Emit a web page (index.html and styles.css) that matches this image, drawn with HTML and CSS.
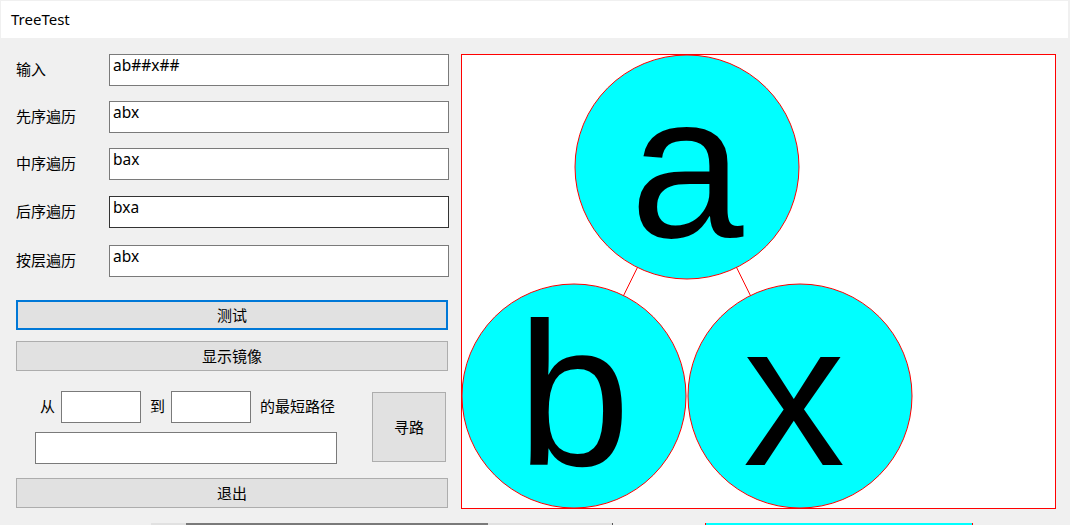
FILE: index.html
```html
<!DOCTYPE html>
<html lang="zh-CN">
<head>
<meta charset="utf-8">
<title>TreeTest</title>
<link rel="stylesheet" href="styles.css">
</head>
<body>
<div class="window">
  <div class="titlebar">TreeTest</div>
  <div class="main">
    <div class="panel">
      <div class="field">
        <span class="label">输入</span>
        <input class="textbox" type="text" value="ab##x##">
      </div>
      <div class="field">
        <span class="label">先序遍历</span>
        <input class="textbox" type="text" value="abx">
      </div>
      <div class="field">
        <span class="label">中序遍历</span>
        <input class="textbox" type="text" value="bax">
      </div>
      <div class="field field-shift1">
        <span class="label">后序遍历</span>
        <input class="textbox textbox-hover" type="text" value="bxa">
      </div>
      <div class="field field-shift2">
        <span class="label">按层遍历</span>
        <input class="textbox" type="text" value="abx">
      </div>
      <button class="btn btn-focus btn-test">测试</button>
      <button class="btn btn-mirror">显示镜像</button>
      <div class="path">
        <div class="path-left">
          <div class="path-row">
            <span class="plabel">从</span>
            <input class="textbox small" type="text">
            <span class="plabel to">到</span>
            <input class="textbox small" type="text">
            <span class="plabel tail">的最短路径</span>
          </div>
          <input class="textbox result" type="text">
        </div>
        <button class="btn btn-find">寻路</button>
      </div>
      <button class="btn btn-exit">退出</button>
    </div>
    <svg class="canvas" width="595" height="455" viewBox="0 0 595 455">
      <rect x="0.5" y="0.5" width="594" height="454" fill="#ffffff" stroke="#ff0000" stroke-width="1"/>
      <line x1="226" y1="113" x2="113" y2="342" stroke="#ff0000" stroke-width="1"/>
      <line x1="226" y1="113" x2="339" y2="342" stroke="#ff0000" stroke-width="1"/>
      <circle cx="226" cy="113" r="112" fill="#00ffff" stroke="#ff0000" stroke-width="1"/>
      <circle cx="113" cy="342" r="112" fill="#00ffff" stroke="#ff0000" stroke-width="1"/>
      <circle cx="339" cy="342" r="112" fill="#00ffff" stroke="#ff0000" stroke-width="1"/>
      <text class="node-text" x="169" y="183">a</text>
      <text class="node-text" x="56" y="411">b</text>
      <text class="node-text" x="282" y="411">x</text>
    </svg>
  </div>
  <div class="bottom-strip">
    <span class="seg seg-gap1"></span>
    <span class="seg seg-light1"></span>
    <span class="seg seg-dark"></span>
    <span class="seg seg-light2"></span>
    <span class="seg seg-mark"></span>
    <span class="seg seg-gap2"></span>
    <span class="seg seg-red"></span>
    <span class="seg seg-cyan"></span>
    <span class="seg seg-red"></span>
  </div>
</div>
</body>
</html>
```

FILE: styles.css
```css
html, body {
  margin: 0;
  padding: 0;
  background: #f0f0f0;
}

body {
  width: 1070px;
  height: 525px;
  overflow: hidden;
  font-family: "Noto Sans", "Noto Sans CJK SC", sans-serif;
  font-size: 15px;
  color: #000000;
}

.window {
  display: flex;
  flex-direction: column;
  height: 525px;
}

.titlebar {
  margin: 1px 2px 0 1px;
  height: 37px;
  background: #ffffff;
  padding-left: 10px;
  line-height: 37px;
  font-size: 15px;
  box-sizing: border-box;
  padding-bottom: 1px;
}

.main {
  display: flex;
  padding: 16px 0 0 16px;
  gap: 12px;
  height: 455px;
}

.panel {
  width: 433px;
  display: flex;
  flex-direction: column;
}

.field {
  display: flex;
  align-items: center;
  height: 32px;
  margin-bottom: 15px;
}

.field-shift1 {
  margin-top: 1px;
}

.field-shift2 {
  margin-top: 2px;
  margin-bottom: 23px;
}

.label {
  width: 93px;
  font-family: "Noto Sans CJK SC", sans-serif;
  font-size: 15px;
  white-space: nowrap;
  padding-bottom: 3px;
}

.textbox {
  box-sizing: border-box;
  width: 340px;
  height: 32px;
  margin: 0;
  border: 1px solid #7a7a7a;
  border-radius: 0;
  background: #ffffff;
  padding: 0 3px 10px;
  line-height: 20px;
  font-family: "Noto Sans", "Noto Sans CJK SC", sans-serif;
  font-size: 15.5px;
  color: #000000;
  outline: none;
}

.textbox-hover {
  border-color: #333333;
}

.btn {
  box-sizing: border-box;
  margin: 0;
  padding: 0 0 2px;
  background: #e1e1e1;
  border: 1px solid #adadad;
  border-radius: 0;
  font-family: "Noto Sans CJK SC", sans-serif;
  font-size: 15px;
  color: #000000;
}

.btn-test,
.btn-mirror,
.btn-exit {
  width: 432px;
  height: 30px;
}

.btn-focus {
  border: 2px solid #0078d7;
}

.btn-mirror {
  margin-top: 11px;
}

.path {
  display: flex;
  align-items: flex-start;
  margin-top: 20px;
  height: 73px;
}

.path-left {
  display: flex;
  flex-direction: column;
  width: 356px;
}

.path-row {
  display: flex;
  align-items: center;
  padding-left: 24px;
  height: 32px;
}

.plabel {
  font-family: "Noto Sans CJK SC", sans-serif;
  font-size: 15px;
  white-space: nowrap;
  margin-right: 6px;
  padding-bottom: 3px;
}

.plabel.to {
  margin-left: 9px;
}

.plabel.tail {
  margin-left: 9px;
  margin-right: 0;
}

.textbox.small {
  width: 80px;
}

.textbox.result {
  width: 302px;
  margin: 9px 0 0 19px;
}

.btn-find {
  width: 74px;
  height: 70px;
  margin-top: 1px;
}

.btn-exit {
  margin-top: 14px;
}

.canvas {
  display: block;
  overflow: visible;
}

.node-text {
  font-family: "Liberation Sans", Arial, sans-serif;
  font-size: 204px;
  fill: #000000;
}

.bottom-strip {
  display: flex;
  height: 2px;
  margin-top: 14px;
}

.seg {
  display: block;
  height: 2px;
}

.seg-gap1 { width: 151px; }
.seg-light1 { width: 35px; background: #e1e1e1; }
.seg-dark { width: 302px; background: #7a7a7a; }
.seg-light2 { width: 124px; background: #e1e1e1; }
.seg-mark { width: 1px; background: #555555; }
.seg-gap2 { width: 92px; }
.seg-red { width: 1px; background: #ff0000; }
.seg-cyan { width: 266px; background: #00ffff; }
```
